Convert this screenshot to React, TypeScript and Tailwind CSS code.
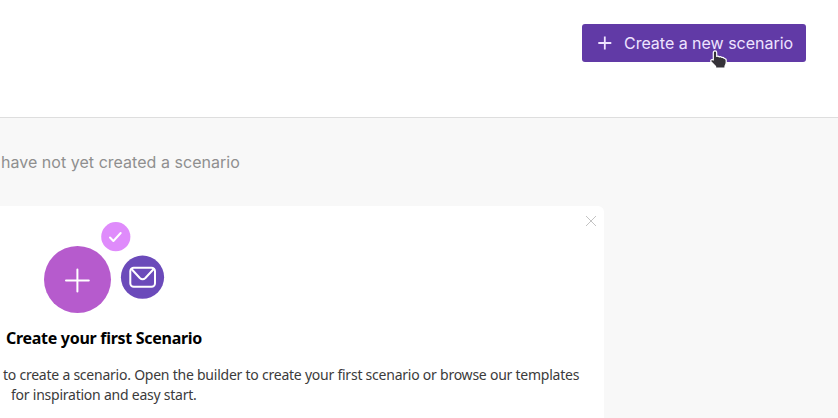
function Header() {
  return (
    <header className="flex h-[118px] items-start justify-end border-b border-[#dedede] bg-white pt-6 pr-8">
      <button className="relative flex h-[38px] w-[224px] items-center rounded-[3px] bg-[#613aa6] pl-4 text-[#eee4ff]">
        <svg className="h-[14px] w-[14px] shrink-0" viewBox="0 0 14 14" fill="none" stroke="currentColor" strokeWidth="1.8">
          <path d="M6.800 .5v13M.3 7h13" />
        </svg>
        <span className="ml-3 font-['Inter',sans-serif] text-base leading-6 tracking-[-0.02px] whitespace-nowrap">Create a new scenario</span>
        <Pointer />
      </button>
    </header>
  );
}

function Pointer() {
  return (
    <svg className="absolute top-[26px] left-[128px] h-[20px] w-[19px]" viewBox="0 0 19 20">
      <path d="M5 .9c1 0 1.700.7 1.700 1.800v3.800c.8-.4 1.900-.3 2.500.4.900-.4 2-.2 2.600.6 1-.2 2.100.2 2.500 1 1.200-.1 1.900.7 1.900 1.900v2.200c0 1.600-.5 2.400-1.200 3.500v1.900H5.600v-1.600L1.200 12c-.9-1.100-.3-2.700 1.200-2.500l.9.5V2.700C3.300 1.600 4 .9 5 .9z" fill="#353238" stroke="#fff" strokeWidth="1.2" strokeLinejoin="round" />
    </svg>
  );
}

function Illustration() {
  return (
    <svg className="mt-4 ml-[44px] block h-[92px] w-[121px]" viewBox="44 222 121 92" fill="none" stroke="#fff" strokeLinecap="round" strokeLinejoin="round">
      <circle cx="77.500" cy="279.500" r="33.500" fill="#b65bcd" stroke="none" />
      <path d="M77.400 269.500v22M66 280.600h22.800" strokeWidth="2" />
      <circle cx="115.800" cy="236.700" r="14.600" fill="#df8bfb" stroke="none" />
      <path d="M110 237.500l3.400 3.500 7.300-8" strokeWidth="2" />
      <circle cx="142.500" cy="277.200" r="21.600" fill="#6b4aba" stroke="none" />
      <rect x="130.300" y="267.800" width="24.700" height="19" rx="3.500" strokeWidth="2" />
      <path d="M131.500 269l8.300 9q2.800 2.600 5.600 0l8.300-9" strokeWidth="2" />
    </svg>
  );
}

export default function App() {
  return (
    <div className="h-[418px] w-[838px] overflow-hidden bg-[#f8f8f8]">
      <Header />
      <main>
        <p className="mt-8 ml-px font-['Inter',sans-serif] text-base leading-6 tracking-[0.03px] text-[#8f8f8f]">have not yet created a scenario</p>
        <section className="relative mt-8 h-[212px] w-[604px] rounded-tr-[6px] bg-white font-['Noto_Sans',sans-serif]">
          <svg className="absolute top-[10px] right-2 h-[10px] w-[10px]" viewBox="0 0 10 10" stroke="#bcbcbc" strokeWidth=".9">
            <path d="M0 0l10 10M10 0L0 10" />
          </svg>
          <div className="h-[108px] overflow-hidden">
            <Illustration />
          </div>
          <h2 className="mt-3 ml-[6px] text-base leading-6 font-bold tracking-[-0.29px] whitespace-nowrap text-black">Create your first Scenario</h2>
          <p className="mt-[15px] ml-[3px] text-[14px] leading-5 tracking-[-0.235px] whitespace-nowrap text-[#3b3b3b]">
            <span className="block">to create a scenario. Open the builder to create your first scenario or browse our templates</span>
            <span className="ml-2 block">for inspiration and easy start.</span>
          </p>
        </section>
      </main>
    </div>
  );
}
